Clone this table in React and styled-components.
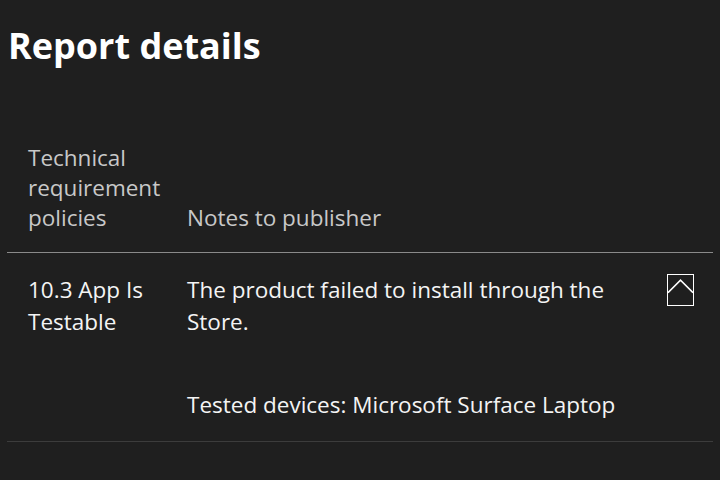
import React from 'react';
import styled, { createGlobalStyle } from 'styled-components';

const GlobalStyle = createGlobalStyle`
  html, body {
    margin: 0;
    background: #1f1f1f;
  }
  body {
    font-family: 'Segoe UI', 'Open Sans', 'Noto Sans', sans-serif;
    color: #ffffff;
  }
`;

const Page = styled.div`
  padding: 18px 7px 0 7px;
  min-height: 480px;
  box-sizing: border-box;
`;

const Title = styled.h1`
  margin: 0 0 0 1px;
  font-size: 36px;
  font-weight: 700;
  line-height: 56px;
  color: #ffffff;
`;

const Table = styled.div`
  margin-top: 69px;
  display: grid;
  grid-template-columns: 159px 480px 1fr;
`;

const HeadCell = styled.div`
  padding: 0 0 19px 21px;
  font-size: 22.5px;
  line-height: 30px;
  color: #c8c8c8;
  border-bottom: 1px solid #8a8a8a;
  display: flex;
  align-items: flex-end;
`;

const Cell = styled.div`
  padding: 21px 0 20px 21px;
  font-size: 22.5px;
  line-height: 32px;
  color: #f4f4f4;
  border-bottom: 1px solid #3c3c3c;
`;

const Note = styled.p`
  margin: 0 0 51px 0;
  &:last-child { margin-bottom: 0; }
`;

const ToggleCell = styled.div`
  padding: 21px 0 0 21px;
  border-bottom: 1px solid #3c3c3c;
`;

const ToggleButton = styled.button`
  width: 27px;
  height: 32px;
  padding: 0;
  border: 1.5px solid #ffffff;
  background: transparent;
  display: flex;
  align-items: flex-start;
  justify-content: center;
  cursor: pointer;
`;

export default function App() {
  return (
    <>
      <GlobalStyle />
      <Page>
        <Title>Report details</Title>
        <Table>
          <HeadCell>Technical<br />requirement<br />policies</HeadCell>
          <HeadCell>Notes to publisher</HeadCell>
          <HeadCell />
          <Cell>10.3 App Is Testable</Cell>
          <Cell>
            <Note>The product failed to install through the Store.</Note>
            <Note>Tested devices: Microsoft Surface Laptop</Note>
          </Cell>
          <ToggleCell>
            <ToggleButton aria-label="Collapse">
              <svg width="26" height="20" viewBox="0 0 26 20">
                <polyline points="0,18 13,5 26,18" fill="none" stroke="#ffffff" strokeWidth="1.6" />
              </svg>
            </ToggleButton>
          </ToggleCell>
        </Table>
      </Page>
    </>
  );
}
